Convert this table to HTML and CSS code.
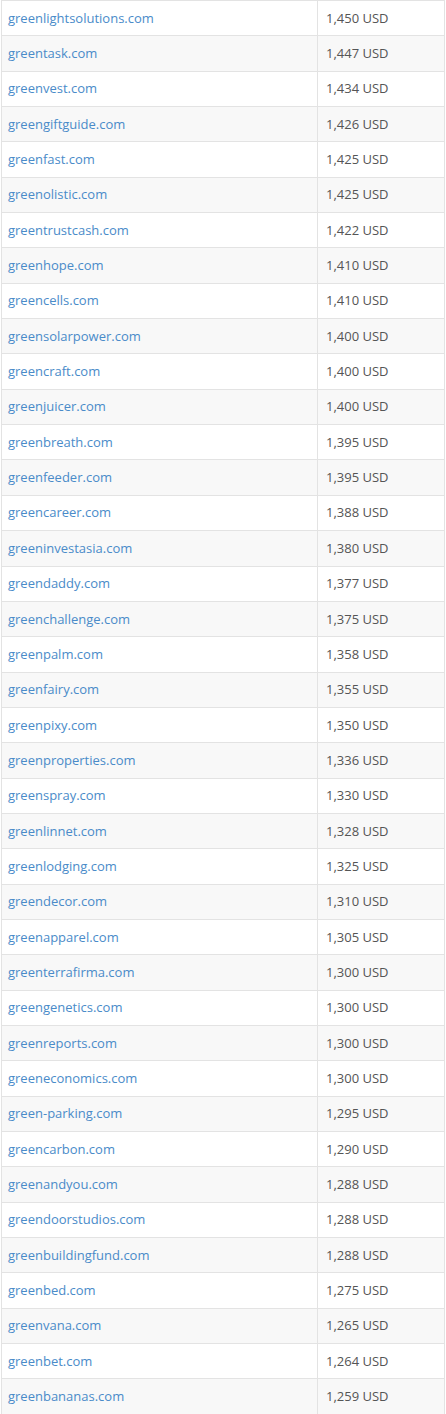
FILE: index.html
```html
<!DOCTYPE html>
<html>
<head>
<meta charset="utf-8">
<link rel="stylesheet" href="styles.css">
</head>
<body>
<div class="list">
<div class="row"><a class="name" href="#">greenlightsolutions.com</a><span class="price">1,450 USD</span></div>
<div class="row"><a class="name" href="#">greentask.com</a><span class="price">1,447 USD</span></div>
<div class="row"><a class="name" href="#">greenvest.com</a><span class="price">1,434 USD</span></div>
<div class="row"><a class="name" href="#">greengiftguide.com</a><span class="price">1,426 USD</span></div>
<div class="row"><a class="name" href="#">greenfast.com</a><span class="price">1,425 USD</span></div>
<div class="row"><a class="name" href="#">greenolistic.com</a><span class="price">1,425 USD</span></div>
<div class="row"><a class="name" href="#">greentrustcash.com</a><span class="price">1,422 USD</span></div>
<div class="row"><a class="name" href="#">greenhope.com</a><span class="price">1,410 USD</span></div>
<div class="row"><a class="name" href="#">greencells.com</a><span class="price">1,410 USD</span></div>
<div class="row"><a class="name" href="#">greensolarpower.com</a><span class="price">1,400 USD</span></div>
<div class="row"><a class="name" href="#">greencraft.com</a><span class="price">1,400 USD</span></div>
<div class="row"><a class="name" href="#">greenjuicer.com</a><span class="price">1,400 USD</span></div>
<div class="row"><a class="name" href="#">greenbreath.com</a><span class="price">1,395 USD</span></div>
<div class="row"><a class="name" href="#">greenfeeder.com</a><span class="price">1,395 USD</span></div>
<div class="row"><a class="name" href="#">greencareer.com</a><span class="price">1,388 USD</span></div>
<div class="row"><a class="name" href="#">greeninvestasia.com</a><span class="price">1,380 USD</span></div>
<div class="row"><a class="name" href="#">greendaddy.com</a><span class="price">1,377 USD</span></div>
<div class="row"><a class="name" href="#">greenchallenge.com</a><span class="price">1,375 USD</span></div>
<div class="row"><a class="name" href="#">greenpalm.com</a><span class="price">1,358 USD</span></div>
<div class="row"><a class="name" href="#">greenfairy.com</a><span class="price">1,355 USD</span></div>
<div class="row"><a class="name" href="#">greenpixy.com</a><span class="price">1,350 USD</span></div>
<div class="row"><a class="name" href="#">greenproperties.com</a><span class="price">1,336 USD</span></div>
<div class="row"><a class="name" href="#">greenspray.com</a><span class="price">1,330 USD</span></div>
<div class="row"><a class="name" href="#">greenlinnet.com</a><span class="price">1,328 USD</span></div>
<div class="row"><a class="name" href="#">greenlodging.com</a><span class="price">1,325 USD</span></div>
<div class="row"><a class="name" href="#">greendecor.com</a><span class="price">1,310 USD</span></div>
<div class="row"><a class="name" href="#">greenapparel.com</a><span class="price">1,305 USD</span></div>
<div class="row"><a class="name" href="#">greenterrafirma.com</a><span class="price">1,300 USD</span></div>
<div class="row"><a class="name" href="#">greengenetics.com</a><span class="price">1,300 USD</span></div>
<div class="row"><a class="name" href="#">greenreports.com</a><span class="price">1,300 USD</span></div>
<div class="row"><a class="name" href="#">greeneconomics.com</a><span class="price">1,300 USD</span></div>
<div class="row"><a class="name" href="#">green-parking.com</a><span class="price">1,295 USD</span></div>
<div class="row"><a class="name" href="#">greencarbon.com</a><span class="price">1,290 USD</span></div>
<div class="row"><a class="name" href="#">greenandyou.com</a><span class="price">1,288 USD</span></div>
<div class="row"><a class="name" href="#">greendoorstudios.com</a><span class="price">1,288 USD</span></div>
<div class="row"><a class="name" href="#">greenbuildingfund.com</a><span class="price">1,288 USD</span></div>
<div class="row"><a class="name" href="#">greenbed.com</a><span class="price">1,275 USD</span></div>
<div class="row"><a class="name" href="#">greenvana.com</a><span class="price">1,265 USD</span></div>
<div class="row"><a class="name" href="#">greenbet.com</a><span class="price">1,264 USD</span></div>
<div class="row"><a class="name" href="#">greenbananas.com</a><span class="price">1,259 USD</span></div>
</div>
</body>
</html>
```
FILE: styles.css
```css
html, body {
  margin: 0;
  padding: 0;
  background: #fff;
}
body {
  font-family: "Open Sans", "Liberation Sans", sans-serif;
  font-size: 13px;
  color: #555;
}
.list {
  margin-left: 1px;
  width: 444px;
  border-left: 1px solid #e3e3e3;
  border-right: 1px solid #e3e3e3;
  box-sizing: border-box;
}
.row {
  display: grid;
  grid-template-columns: 315px 1fr;
  height: 35.35px;
  box-sizing: border-box;
  border-top: 1px solid #e3e3e3;
  background: #fff;
}
.row:nth-child(even) {
  background: #f8f8f8;
}
.name, .price {
  display: flex;
  align-items: center;
  padding: 0 8px 1px;
}
.name {
  padding-left: 6px;
  color: #4a8bc9;
  text-decoration: none;
}
.price {
  border-left: 1px solid #e3e3e3;
  color: #555;
}
```
